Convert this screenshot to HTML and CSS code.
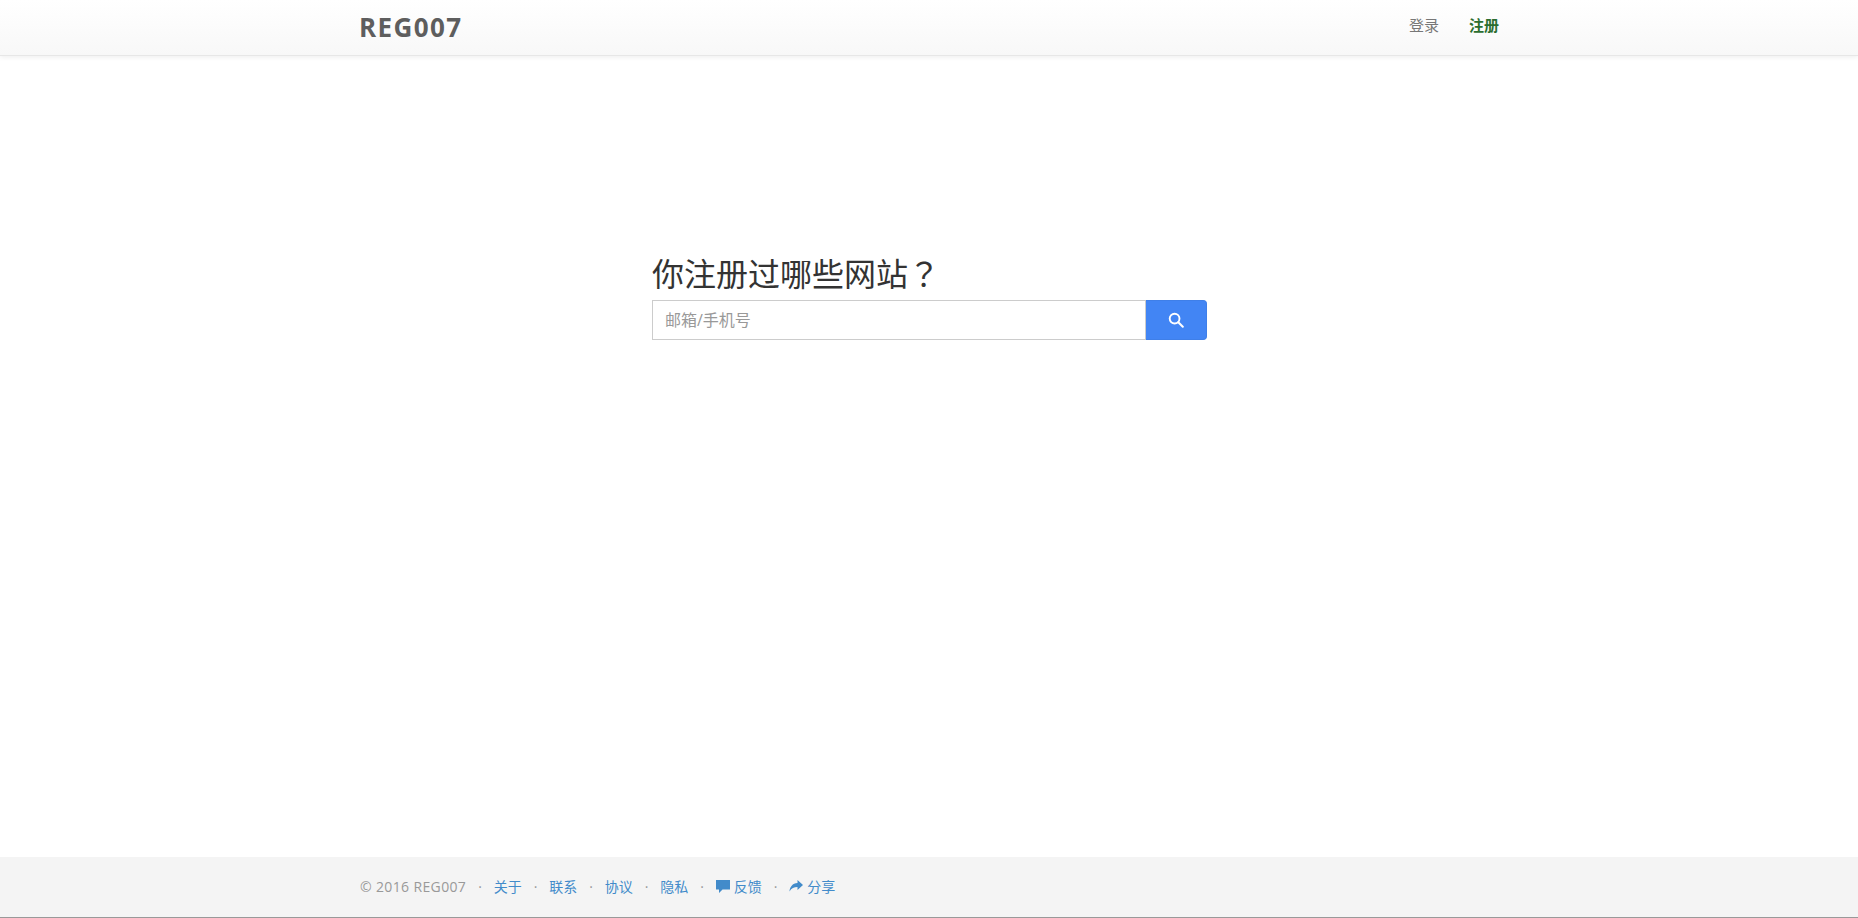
FILE: index.html
```html
<!DOCTYPE html>
<html lang="zh-CN">
<head>
<meta charset="utf-8">
<title>REG007</title>
<link rel="stylesheet" href="styles.css">
</head>
<body>
<div class="page">
  <header class="navbar">
    <div class="container nav-inner">
      <a class="brand">REG007</a>
      <nav class="nav-links">
        <a class="nav-login">登录</a>
        <a class="nav-register">注册</a>
      </nav>
    </div>
  </header>
  <main class="main">
    <form class="search">
      <h1 class="search-title">你注册过哪些网站<span class="qmark" lang="ja">？</span></h1>
      <div class="search-row">
        <input class="search-input" type="text" placeholder="邮箱/手机号">
        <button class="search-btn" type="button" aria-label="搜索">
          <svg class="search-icon" viewBox="0 0 16 16" width="16" height="16"><circle cx="6.6" cy="6.6" r="4.9" fill="none" stroke="#fff" stroke-width="1.9"/><path d="M10.3 10.3 L14.8 14.8" stroke="#fff" stroke-width="2" stroke-linecap="round"/></svg>
        </button>
      </div>
    </form>
  </main>
  <footer class="footer">
    <div class="container footer-inner">
      <span class="copy">© 2016 REG007</span>
      <span class="dot">·</span><a class="flink">关于</a>
      <span class="dot">·</span><a class="flink">联系</a>
      <span class="dot">·</span><a class="flink">协议</a>
      <span class="dot">·</span><a class="flink">隐私</a>
      <span class="dot">·</span><a class="flink"><svg class="ficon" viewBox="0 0 14 13" width="14" height="13"><path d="M0 0H14V9.5H6.5L3 13V9.5H0Z" fill="#428bca"/></svg>反馈</a>
      <span class="dot">·</span><a class="flink"><svg class="ficon" viewBox="0 0 14 12" width="14" height="12"><path d="M8.5 0 14 5 8.5 10V7C5 7 2.5 8 0.5 11.5 0.8 7 3.5 3.2 8.5 3Z" fill="#428bca"/></svg>分享</a>
    </div>
  </footer>
</div>
</body>
</html>
```
FILE: styles.css
```css
* { box-sizing: border-box; }
html, body { margin: 0; height: 100%; }
body {
  font-family: "Open Sans", "Noto Sans CJK SC", sans-serif;
  font-size: 14px;
  color: #333;
  background: #fff;
}
.page { height: 918px; display: flex; flex-direction: column; overflow: hidden; }
.container { width: 1170px; margin: 0 auto; padding: 0 15px; }
.navbar {
  height: 56px;
  flex: none;
  background: linear-gradient(to bottom, #fff, #f8f8f8);
  border-bottom: 1px solid #e7e7e7;
  box-shadow: 0 1px 5px rgba(0, 0, 0, .075);
}
.nav-inner { height: 54px; display: flex; justify-content: space-between; align-items: center; }
.brand {
  font-family: "Open Sans", sans-serif;
  font-weight: 700;
  font-size: 26px;
  letter-spacing: 1.4px;
  color: #5e5e5e;
}
.nav-links { display: flex; gap: 30px; margin-top: -5px; font-size: 15px; }
.nav-login { color: #777; }
.nav-register { color: #2c6e2f; font-weight: 700; }
.main { flex: 1; display: flex; justify-content: center; padding-top: 192px; }
.search { width: 555px; margin-left: 1px; }
.search-title {
  margin: 0 0 2px;
  font-weight: 400;
  font-size: 32px;
  line-height: 48px;
  color: #333;
}
.qmark { font-family: "Noto Sans CJK JP", sans-serif; }
.search-row { display: flex; height: 40px; }
.search-input {
  flex: 1;
  min-width: 0;
  height: 40px;
  padding: 0 12px;
  border: 1px solid #ccc;
  border-radius: 0;
  outline: none;
  font: 16px "Open Sans", "Noto Sans CJK SC", sans-serif;
  color: #555;
}
.search-input::placeholder { color: #999; opacity: 1; }
.search-btn {
  width: 61px;
  height: 40px;
  border: 1px solid #3f7fe8;
  border-left: 0;
  border-radius: 0 4px 4px 0;
  background: #4285f4;
  padding: 0 1px 0 0;
  display: flex;
  align-items: center;
  justify-content: center;
}
.footer { height: 61px; flex: none; background: #f4f4f4; border-bottom: 1px solid #999; }
.footer-inner { height: 60px; padding-bottom: 2px; display: flex; align-items: center; font-size: 14px; }
.copy { color: #999; letter-spacing: .36px; margin-left: 1px; }
.dot { color: #999; width: 27.5px; text-align: center; }
.dot:first-of-type { width: 26.5px; }
.flink { color: #428bca; display: inline-flex; align-items: center; }
.ficon { margin-right: 4px; }
```
